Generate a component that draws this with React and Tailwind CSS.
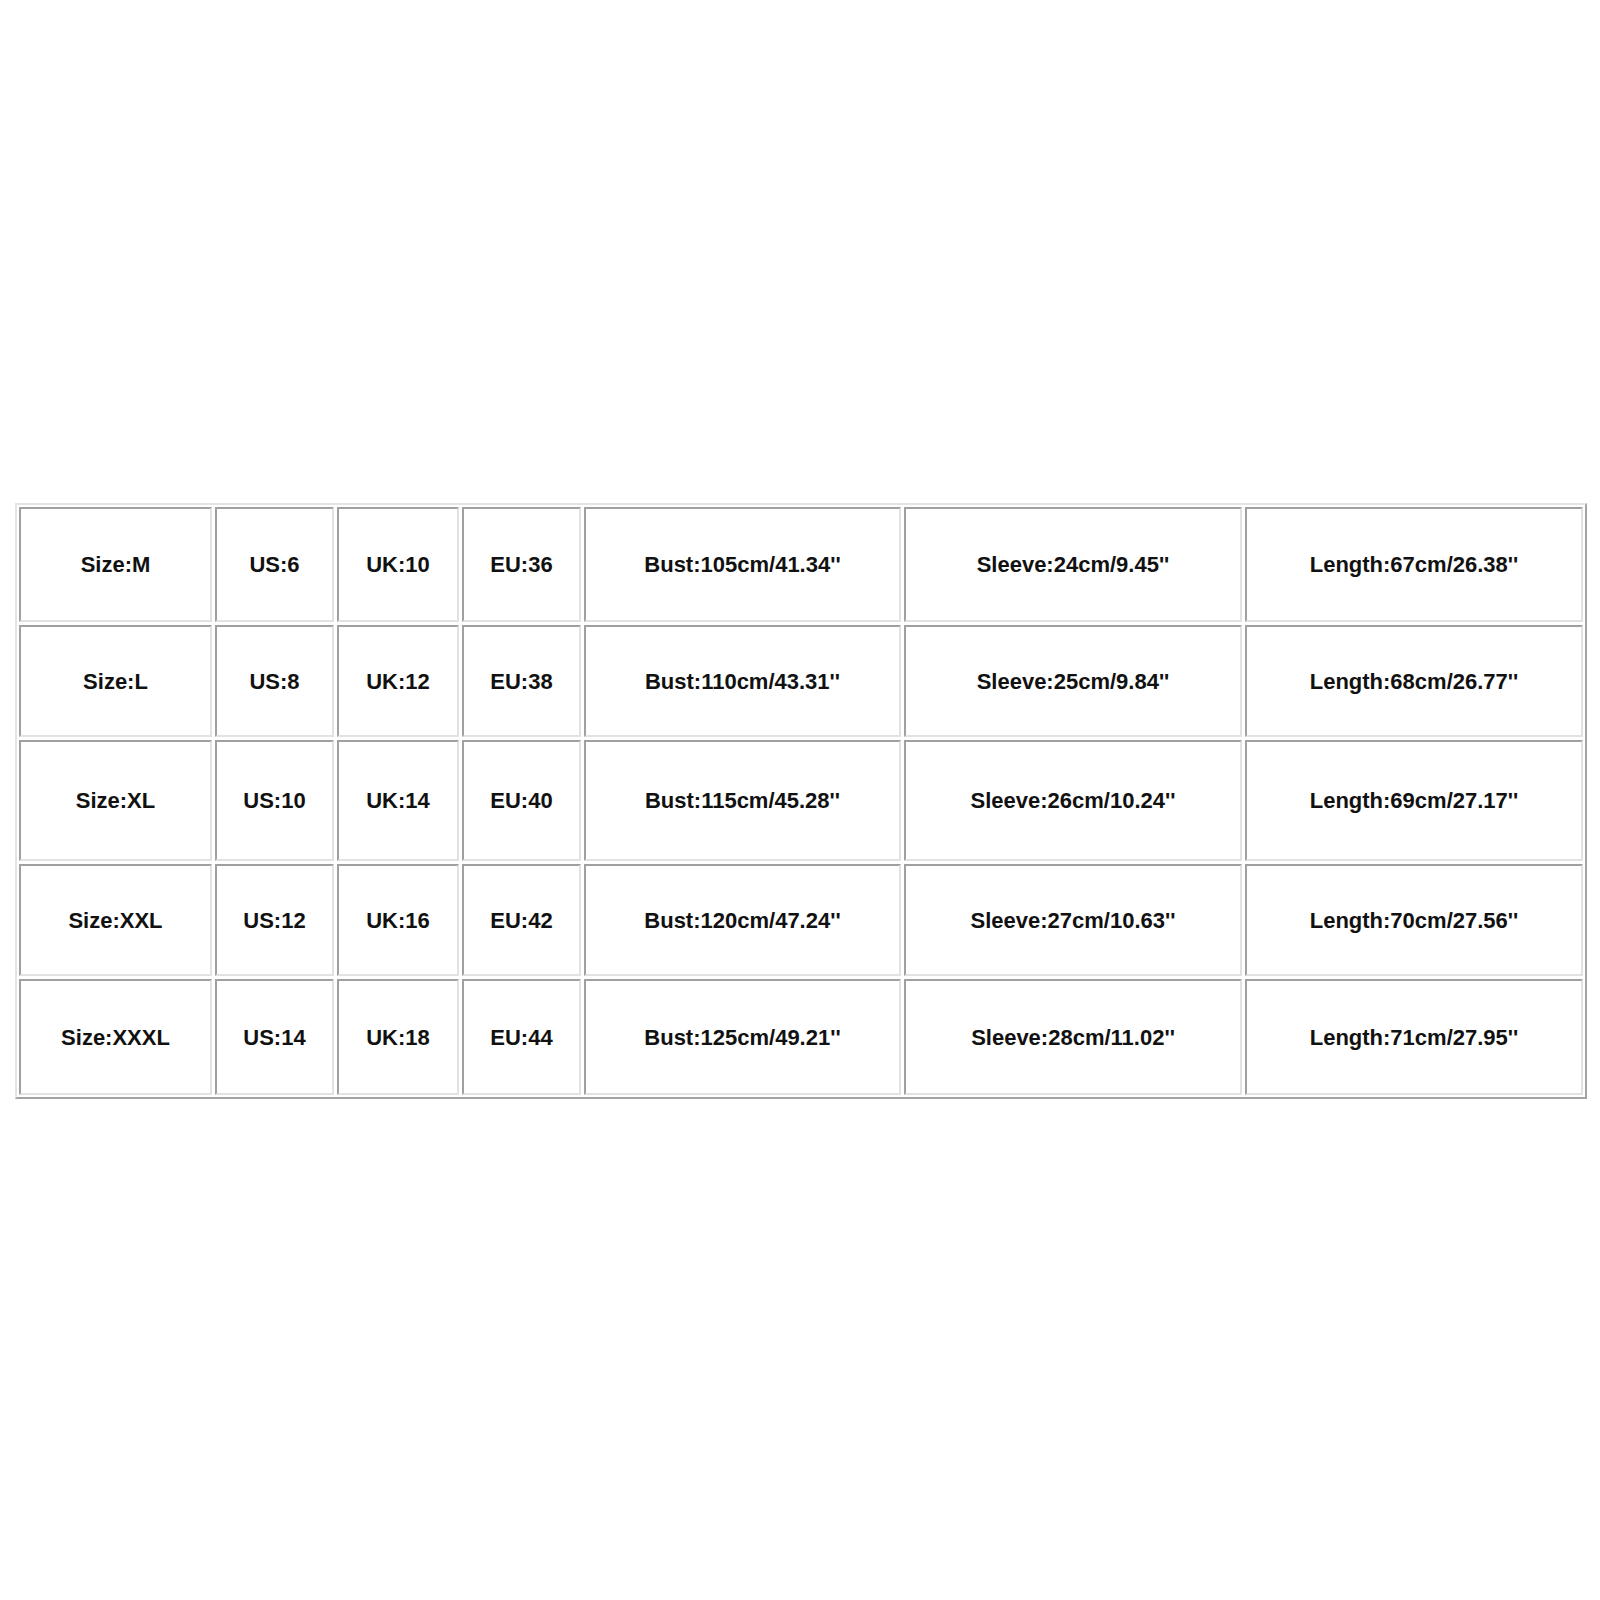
import React from "react";

const rows = [
  ["Size:M", "US:6", "UK:10", "EU:36", "Bust:105cm/41.34''", "Sleeve:24cm/9.45''", "Length:67cm/26.38''"],
  ["Size:L", "US:8", "UK:12", "EU:38", "Bust:110cm/43.31''", "Sleeve:25cm/9.84''", "Length:68cm/26.77''"],
  ["Size:XL", "US:10", "UK:14", "EU:40", "Bust:115cm/45.28''", "Sleeve:26cm/10.24''", "Length:69cm/27.17''"],
  ["Size:XXL", "US:12", "UK:16", "EU:42", "Bust:120cm/47.24''", "Sleeve:27cm/10.63''", "Length:70cm/27.56''"],
  ["Size:XXXL", "US:14", "UK:18", "EU:44", "Bust:125cm/49.21''", "Sleeve:28cm/11.02''", "Length:71cm/27.95''"],
];

export default function App() {
  return (
    <div className="w-[1600px] h-[1600px] bg-white pt-[503px] pl-[15px]" style={{ fontFamily: '"Liberation Sans", Arial, sans-serif' }}>
      <div className="w-[1572px] h-[596px] border-2 border-t-[#e4e4e4] border-l-[#e4e4e4] border-b-[#a3a3a3] border-r-[#a3a3a3] p-[2px]">
        <div className="grid grid-cols-[193px_119px_122px_119px_317px_338px_338px] grid-rows-[115px_112px_121px_112px_116px] gap-[3px]">
          {rows.map((row, i) =>
            row.map((cell, j) => (
              <div
                key={i + "-" + j}
                className="flex items-center justify-center border-2 border-t-[#a0a0a0] border-l-[#a0a0a0] border-b-[#e2e2e2] border-r-[#e2e2e2] text-[22px] font-bold text-[#111111] whitespace-nowrap"
              >
                {cell}
              </div>
            ))
          )}
        </div>
      </div>
    </div>
  );
}
